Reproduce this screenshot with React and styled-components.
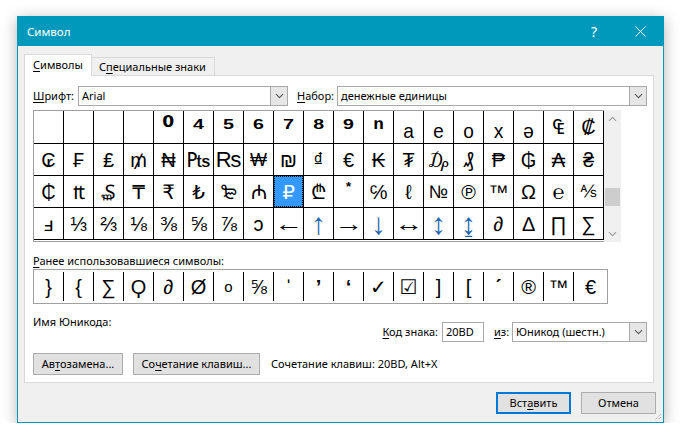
import React from 'react';
import styled, { createGlobalStyle } from 'styled-components';

const Global = createGlobalStyle`
  html, body { margin: 0; padding: 0; background: #fff; }
  body { font-family: "Noto Sans", "Open Sans", sans-serif; font-size: 11px; color: #000; }
  * { box-sizing: border-box; }
`;

const Page = styled.div`
  padding: 16px 0 0 17px;
`;

const Window = styled.div`
  position: relative;
  width: 647px;
  height: 407px;
  border: 1px solid #0099bc;
  background: #f0f0f0;
  box-shadow: 0 3px 14px rgba(0, 0, 0, 0.3);
  display: flex;
  flex-direction: column;
`;

const TitleBar = styled.div`
  height: 29px;
  flex: none;
  background: #0099bc;
  color: #fff;
  display: flex;
  align-items: center;
`;

const Title = styled.div`
  flex: 1;
  padding-left: 9px;
  font-size: 11.5px;
  line-height: 16px;
`;

const CaptionButton = styled.div`
  width: 46px;
  height: 29px;
  display: flex;
  align-items: center;
  justify-content: center;
  color: #fff;
  font-size: 14px;
`;

const Body = styled.div`
  flex: 1;
  display: flex;
  flex-direction: column;
  padding: 8px 9px 0 6px;
`;

const TabStrip = styled.div`
  height: 21px;
  display: flex;
  align-items: flex-end;
  position: relative;
  z-index: 1;
`;

const Tab = styled.div`
  height: ${p => (p.$active ? 22 : 18)}px;
  width: ${p => p.$w}px;
  margin-left: ${p => (p.$active ? 0 : -1)}px;
  margin-bottom: ${p => (p.$active ? -1 : 0)}px;
  background: ${p => (p.$active ? '#fff' : '#f0f0f0')};
  border: 1px solid #d9d9d9;
  border-bottom: none;
  display: flex;
  align-items: center;
  padding-left: ${p => (p.$active ? 8 : 7)}px;
  padding-bottom: ${p => (p.$active ? 1 : 0)}px;
  line-height: 16px;
  white-space: nowrap;
`;

const Key = styled.span`
  text-decoration: underline;
  text-underline-offset: 2px;
  text-decoration-thickness: 1px;
`;

const Panel = styled.div`
  height: 308px;
  background: #fff;
  border: 1px solid #d9d9d9;
  padding: 10px 6px 7px 8px;
  display: flex;
  flex-direction: column;
`;

const FieldRow = styled.div`
  display: flex;
  align-items: center;
  height: 20px;
`;

const Label = styled.div`
  width: ${p => (p.$w ? `${p.$w}px` : 'auto')};
  margin-left: ${p => p.$ml || 0}px;
  line-height: 16px;
  white-space: nowrap;
`;

const Combo = styled.div`
  width: ${p => p.$w}px;
  height: 20px;
  border: 1px solid #a9a9a9;
  display: flex;
  align-items: stretch;
  background: #fff;
`;

const ComboText = styled.div`
  flex: 1;
  padding-left: 3px;
  line-height: 18px;
  white-space: nowrap;
  overflow: hidden;
`;

const ComboButton = styled.div`
  width: 17px;
  background: #e6e6e6;
  border-left: 1px solid #a9a9a9;
  display: flex;
  align-items: center;
  justify-content: center;
`;

const GridArea = styled.div`
  display: flex;
  margin-top: 4px;
`;

const GridFrame = styled.div`
  border-top: 1px solid #a0a0a0;
  border-left: 1px solid #a0a0a0;
  border-bottom: 1px solid #a0a0a0;
  height: 132px;
  background: #fff;
`;

const Grid = styled.div`
  display: grid;
  grid-template-columns: repeat(19, 29px);
  grid-template-rows: 32px 31px 31px 31px;
  gap: 1px;
  background: #000;
  padding: 0 1px 1px 0;
`;

const Cell = styled.div`
  background: ${p => (p.$sel ? '#3399ff' : '#fff')};
  color: ${p => (p.$sel ? '#fff' : p.$blue ? '#2465b0' : '#000')};
  outline: ${p => (p.$sel ? '1px dotted #000' : 'none')};
  outline-offset: -1px;
  display: flex;
  align-items: ${p => (p.$top ? 'flex-start' : 'center')};
  justify-content: center;
  padding-top: ${p => (p.$top ? 4 : 0)}px;
  font-family: "Liberation Sans", "DejaVu Sans", sans-serif;
  font-size: ${p => p.$fs || 20}px;
  font-weight: ${p => (p.$bold ? 700 : 400)};
  line-height: 1;
  white-space: nowrap;
`;

const Glyph = styled.span`
  display: inline-block;
  transform: ${p => (p.$sx ? `scaleX(${p.$sx})` : 'none')};
`;

const ScrollBar = styled.div`
  width: 17px;
  height: 132px;
  background: #f0f0f0;
  display: flex;
  flex-direction: column;
  align-items: center;
`;

const ScrollArrow = styled.div`
  height: 17px;
  width: 17px;
  display: flex;
  align-items: center;
  justify-content: center;
`;

const ScrollTrack = styled.div`
  flex: 1;
  width: 100%;
  display: flex;
  flex-direction: column;
  padding-top: 61px;
`;

const ScrollThumb = styled.div`
  height: 18px;
  width: 15px;
  margin: 0 auto;
  background: #cdcdcd;
`;

const SectionLabel = styled.div`
  margin-top: 11px;
  line-height: 16px;
`;

const Recent = styled.div`
  width: 575px;
  height: 35px;
  border: 1px solid #a0a0a0;
  display: flex;
  padding: 2px 0;
`;

const RecentCell = styled.div`
  width: ${p => (p.$last ? 'auto' : '30px')};
  flex: ${p => (p.$last ? 1 : 'none')};
  border-right: ${p => (p.$last ? 'none' : '1px solid #000')};
  display: flex;
  align-items: center;
  justify-content: center;
  font-family: "Liberation Sans", "DejaVu Sans", sans-serif;
  font-size: ${p => p.$fs || 20}px;
  font-weight: ${p => (p.$bold ? 700 : 400)};
  line-height: 1;
  white-space: nowrap;
`;

const InfoRow = styled.div`
  margin-top: 10px;
  display: flex;
  align-items: flex-start;
  height: 28px;
`;

const CodeGroup = styled.div`
  margin-left: auto;
  margin-top: 8px;
  display: flex;
  align-items: center;
`;

const TextBox = styled.div`
  width: ${p => p.$w}px;
  height: 20px;
  border: 1px solid #a9a9a9;
  padding-left: 3px;
  line-height: 18px;
  margin-left: ${p => p.$ml || 0}px;
`;

const ButtonRow = styled.div`
  margin-top: 11px;
  display: flex;
  align-items: center;
  gap: 10px;
`;

const Button = styled.div`
  width: ${p => p.$w}px;
  height: 22px;
  background: #e1e1e1;
  border: ${p => (p.$default ? '2px solid #0078d7' : '1px solid #adadad')};
  display: flex;
  align-items: center;
  justify-content: center;
  line-height: 16px;
  white-space: nowrap;
`;

const ShortcutText = styled.div`
  margin-left: 1px;
  line-height: 16px;
`;

const Footer = styled.div`
  display: flex;
  justify-content: flex-end;
  gap: 10px;
  padding-top: 9px;
  margin-right: -2px;
`;

const Grip = styled.svg`
  position: absolute;
  right: 1px;
  bottom: 1px;
`;

const Chevron = ({ dir = 'down', color = '#606060' }) => (
  <svg width="9" height="6" viewBox="0 0 9 6">
    <path
      d={dir === 'down' ? 'M1 1.2 L4.5 4.7 L8 1.2' : 'M1 4.8 L4.5 1.3 L8 4.8'}
      fill="none"
      stroke={color}
      strokeWidth="1.2"
    />
  </svg>
);

const rows = [
  ['', '', '', '', '⁰', '⁴', '⁵', '⁶', '⁷', '⁸', '⁹', 'ⁿ', 'ₐ', 'ₑ', 'ₒ', 'ₓ', 'ₔ', '₠', '₡'],
  ['₢', '₣', '₤', '₥', '₦', '₧', '₨', '₩', '₪', '₫', '€', '₭', '₮', '₯', '₰', '₱', '₲', '₳', '₴'],
  ['₵', '₶', '₷', '₸', '₹', '₺', '₻', '₼', '₽', '₾', '*', '℅', 'ℓ', '№', '℗', '™', 'Ω', '℮', '⅍'],
  ['ⅎ', '⅓', '⅔', '⅛', '⅜', '⅝', '⅞', 'ↄ', '←', '↑', '→', '↓', '↔', '↕', '↨', '∂', '∆', '∏', '∑'],
];

const supChars = '⁰⁴⁵⁶⁷⁸⁹ⁿ';
const subChars = 'ₐₑₒₓₔ';
const blueChars = '↑↓↕↨';
const hArrows = '←→↔';
const sized = { '₧': 22, '₨': 22, '₩': 18, '№': 18, '⅍': 17 };

const recent = ['}', '{', '∑', 'Ϙ', '∂', 'Ø', 'o', '⅝', 'ˈ', '’', '‘', '✓', '☑', ']', '[', 'ˊ', '®', '™', '€'];

function cellProps(ch, r, c) {
  const p = {};
  if (!ch) return p;
  if (supChars.includes(ch)) { p.$fs = 28; p.$bold = true; }
  if (subChars.includes(ch)) p.$fs = 28;
  if (ch === '*') { p.$fs = 13; p.$top = true; p.$bold = true; }
  if (hArrows.includes(ch)) { p.$fs = 22; p.$bold = true; }
  if (blueChars.includes(ch)) { p.$blue = true; p.$fs = 30; }
  if (sized[ch]) p.$fs = sized[ch];
  if (r === 2 && c === 8) p.$sel = true;
  return p;
}

export default function App() {
  return (
    <>
      <Global />
      <Page>
        <Window>
          <TitleBar>
            <Title>Символ</Title>
            <CaptionButton>?</CaptionButton>
            <CaptionButton>
              <svg width="11" height="11" viewBox="0 0 11 11">
                <path d="M0.5 0.5 L10.5 10.5 M10.5 0.5 L0.5 10.5" stroke="#fff" strokeWidth="1" />
              </svg>
            </CaptionButton>
          </TitleBar>
          <Body>
            <TabStrip>
              <Tab $active $w={68}><span><Key>С</Key>имволы</span></Tab>
              <Tab $w={124}><span>С<Key>п</Key>ециальные знаки</span></Tab>
            </TabStrip>
            <Panel>
              <FieldRow>
                <Label $w={45}><Key>Ш</Key>рифт:</Label>
                <Combo $w={210}>
                  <ComboText>Arial</ComboText>
                  <ComboButton><Chevron /></ComboButton>
                </Combo>
                <Label $w={40} $ml={9}><Key>Н</Key>абор:</Label>
                <Combo $w={310}>
                  <ComboText>денежные единицы</ComboText>
                  <ComboButton><Chevron /></ComboButton>
                </Combo>
              </FieldRow>
              <GridArea>
                <GridFrame>
                  <Grid>
                    {rows.map((row, r) =>
                      row.map((ch, c) => (
                        <Cell key={`${r}-${c}`} {...cellProps(ch, r, c)}>
                          {hArrows.includes(ch) && ch ? <Glyph $sx={1.3}>{ch}</Glyph> : ch}
                        </Cell>
                      ))
                    )}
                  </Grid>
                </GridFrame>
                <ScrollBar>
                  <ScrollArrow><Chevron dir="up" color="#a0a0a0" /></ScrollArrow>
                  <ScrollTrack><ScrollThumb /></ScrollTrack>
                  <ScrollArrow><Chevron dir="down" color="#a0a0a0" /></ScrollArrow>
                </ScrollBar>
              </GridArea>
              <SectionLabel><Key>Р</Key>анее использовавшиеся символы:</SectionLabel>
              <Recent>
                {recent.map((ch, i) => (
                  <RecentCell
                    key={i}
                    $last={i === recent.length - 1}
                    $fs={ch === 'o' ? 15 : 20}
                    $bold={'ˈ’‘ˊ'.includes(ch)}
                  >
                    {ch}
                  </RecentCell>
                ))}
              </Recent>
              <InfoRow>
                <Label>Имя Юникода:</Label>
                <CodeGroup>
                  <Label><Key>К</Key>од знака:</Label>
                  <TextBox $w={42} $ml={4}>20BD</TextBox>
                  <Label $ml={10} $w={18}><Key>и</Key>з:</Label>
                  <Combo $w={135}>
                    <ComboText>Юникод (шестн.)</ComboText>
                    <ComboButton><Chevron /></ComboButton>
                  </Combo>
                </CodeGroup>
              </InfoRow>
              <ButtonRow>
                <Button $w={90}>Ав<Key>т</Key>озамена...</Button>
                <Button $w={127}>Со<Key>ч</Key>етание клавиш...</Button>
                <ShortcutText>Сочетание клавиш: 20BD, Alt+X</ShortcutText>
              </ButtonRow>
            </Panel>
            <Footer>
              <Button $w={75} $default>Вст<Key>а</Key>вить</Button>
              <Button $w={75}>Отмена</Button>
            </Footer>
          </Body>
          <Grip width="8" height="8" viewBox="0 0 8 8">
            <path d="M7 1 L1 7 M7 4 L4 7" stroke="#a0a0a0" strokeWidth="1" strokeDasharray="1 1" />
          </Grip>
        </Window>
      </Page>
    </>
  );
}
